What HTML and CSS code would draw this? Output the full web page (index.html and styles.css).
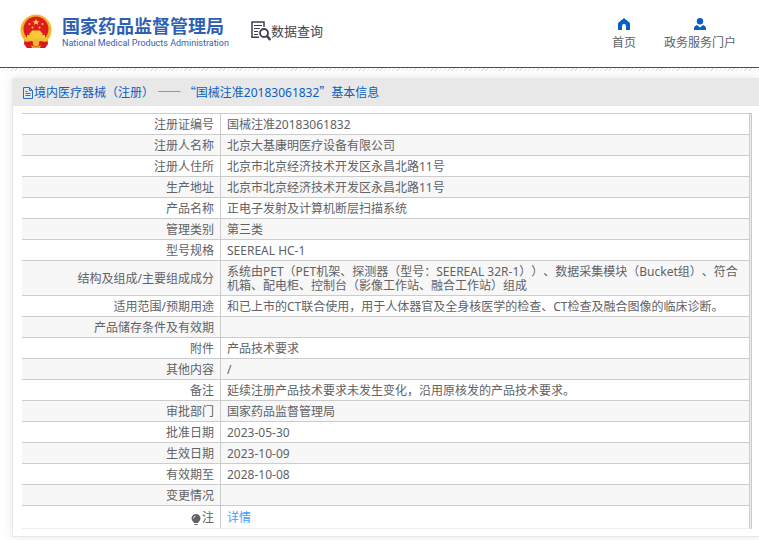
FILE: index.html
```
<!DOCTYPE html>
<html lang="zh-CN">
<head>
  <meta charset="UTF-8">
  <meta name="viewport" content="width=device-width, initial-scale=1.0">
  <title>国家药品监督管理局 数据查询</title>
  <link rel="stylesheet" href="styles.css">
</head>
<body>
  <header class="header">
    <a href="#" class="logo">
      <svg class="emblem" viewBox="0 0 32 34" width="32" height="34" aria-hidden="true">
        <path d="M5 23h22l1 7-3 4H7l-3-4z" fill="#d7191e"/>
        <circle cx="16" cy="16" r="15.500" fill="#f0b62c"/>
        <circle cx="16" cy="15" r="12.500" fill="#dc1c1c"/>
        <path d="M16 5l1 2.200h2.500l-2 1.500.8 2.300-2.300-1.400-2.300 1.400.8-2.300-2-1.500H15z" fill="#fbd545"/>
        <g fill="#f7c83a">
          <circle cx="9.500" cy="10" r="1"/>
          <circle cx="22.500" cy="10" r="1"/>
          <circle cx="12.500" cy="13.500" r="1"/>
          <circle cx="19.500" cy="13.500" r="1"/>
          <path d="M11 18l1-1.500h8l1 1.500zM9 20l2-2h10l2 2-1 1H10zM7 21h18v3H7z"/>
        </g>
        <path d="M4 24h24l-2 4H6z" fill="#f5bf32"/>
        <path d="M5 28l7-1 4 3 4-3 7 1-2 6h-5l-1-3h-6l-1 3H7z" fill="#d7191e"/>
        <circle cx="16" cy="29" r="3.200" fill="#f0b62c"/>
        <path d="M11 31q5 3 10 0l-1 3h-8z" fill="#e9a626"/>
      </svg>
      <span class="logo-text">
        <strong class="logo-cn">国家药品监督管理局</strong>
        <span class="logo-en">National Medical Products Administration</span>
      </span>
    </a>
    <a href="#" class="search-title">
      <svg viewBox="0 0 20 20" width="20" height="20" fill="none" stroke="#3f3d4c" aria-hidden="true">
        <path d="M8 16.300H1V1h12v5" stroke-width="1.500"/>
        <path d="M3 4.500h8M3 7.500h6M3 10.500h4M3 13.500h4" stroke-width="1.200"/>
        <circle cx="13" cy="12" r="4" stroke-width="1.800"/>
        <path d="M16 15l3.300 4" stroke-width="2.400"/>
      </svg>
      数据查询
    </a>
    <nav class="nav">
      <a href="#">
        <svg viewBox="0 0 12 12" width="12" height="12" aria-hidden="true"><path d="M6 0L0 5v7h4V8a2 2 0 0 1 4 0v4h4V5z" fill="#0a5fc0"/></svg>
        首页
      </a>
      <a href="#">
        <svg viewBox="0 0 12 12" width="12" height="12" aria-hidden="true"><circle cx="6" cy="3.200" r="3.200" fill="#0a5fc0"/><path d="M0 12V10q0-2 3-3l3 2.500L9 7q3 1 3 3v2z" fill="#0a5fc0"/></svg>
        政务服务门户
      </a>
    </nav>
  </header>
  <div class="hatch"></div>

  <main class="panel">
    <h1 class="panel-title">
      <svg viewBox="0 0 12 12" width="12" height="12" fill="none" stroke="#2a6fc4" aria-hidden="true"><path d="M1.500 .5h6l3 3v8h-9zM7.500 .5v3h3M3.500 4.500h2M3.500 6.500h5M3.500 8.500h5"/></svg>
      <span>境内医疗器械（注册） <span class="wide">—— “</span>国械注准20183061832<span class="wide">”</span>基本信息</span>
    </h1>
    <div class="panel-body">
      <table class="info">
        <tbody>
          <tr><th scope="row">注册证编号</th><td>国械注准20183061832</td></tr>
          <tr><th scope="row">注册人名称</th><td>北京大基康明医疗设备有限公司</td></tr>
          <tr><th scope="row">注册人住所</th><td>北京市北京经济技术开发区永昌北路11号</td></tr>
          <tr><th scope="row">生产地址</th><td>北京市北京经济技术开发区永昌北路11号</td></tr>
          <tr><th scope="row">产品名称</th><td>正电子发射及计算机断层扫描系统</td></tr>
          <tr><th scope="row">管理类别</th><td>第三类</td></tr>
          <tr><th scope="row">型号规格</th><td>SEEREAL HC-1</td></tr>
          <tr><th scope="row">结构及组成/主要组成成分</th><td>系统由PET（PET机架、探测器（型号：SEEREAL 32R-1））、数据采集模块（Bucket组）、符合机箱、配电柜、控制台（影像工作站、融合工作站）组成</td></tr>
          <tr><th scope="row">适用范围/预期用途</th><td>和已上市的CT联合使用，用于人体器官及全身核医学的检查、CT检查及融合图像的临床诊断。</td></tr>
          <tr><th scope="row">产品储存条件及有效期</th><td></td></tr>
          <tr><th scope="row">附件</th><td>产品技术要求</td></tr>
          <tr><th scope="row">其他内容</th><td>/</td></tr>
          <tr><th scope="row">备注</th><td>延续注册产品技术要求未发生变化，沿用原核发的产品技术要求。</td></tr>
          <tr><th scope="row">审批部门</th><td>国家药品监督管理局</td></tr>
          <tr><th scope="row">批准日期</th><td>2023-05-30</td></tr>
          <tr><th scope="row">生效日期</th><td>2023-10-09</td></tr>
          <tr><th scope="row">有效期至</th><td>2028-10-08</td></tr>
          <tr><th scope="row">变更情况</th><td></td></tr>
          <tr class="note">
            <th scope="row"><svg viewBox="0 0 10 12" width="10" height="12" aria-hidden="true"><path d="M5 0a4.500 4.500 0 0 0-4.500 4.500c0 2 2 3 2.500 4.500h4C7.500 7.500 9.500 6.500 9.500 4.500A4.500 4.500 0 0 0 5 0zM3.500 10h3v1h-3z" fill="#606266"/><path d="M2.500 4.500q0-2 2-2.500" fill="none" stroke="#fff" stroke-width=".8"/></svg>注</th>
            <td><a href="#">详情</a></td>
          </tr>
        </tbody>
      </table>
    </div>
  </main>
</body>
</html>
```
FILE: styles.css
```
* {
  box-sizing: border-box;
}

body {
  margin: 0;
  font-family: "Noto Sans", "Noto Sans CJK SC", sans-serif;
  font-size: 12px;
  line-height: 14px;
  text-spacing-trim: space-all;
  color: #606266;
  background-color: #fff;
  overflow-x: hidden;
}

a {
  text-decoration: none;
  color: inherit;
}

.header {
  display: flex;
  align-items: center;
  padding: 12px 23px 17px 20px;
  border-bottom: 1px solid #0a5caf;
}

.logo {
  display: flex;
  align-items: center;
  gap: 10px;
  color: #2f5fb3;
}

.logo-text {
  display: flex;
  flex-direction: column;
  padding: 3px 0 1px;
}

.logo-cn {
  font-size: 18px;
  line-height: 22px;
}

.logo-en {
  font-family: Roboto, sans-serif;
  font-size: 9px;
  line-height: 12px;
}

.search-title {
  display: flex;
  align-items: center;
  margin-left: 22px;
  font-size: 13px;
  line-height: 20px;
  color: #45444f;
}

.nav {
  display: flex;
  gap: 28px;
  margin-left: auto;
}

.nav a {
  display: flex;
  flex-direction: column;
  align-items: center;
  gap: 6px;
  padding-top: 6px;
}

.hatch {
  height: 3px;
  background: repeating-linear-gradient(135deg, #e4e4e4 0 1px, #fff 1px 3px);
}

.panel {
  margin: 7px 0 4px 12px;
  border: 1px solid #e8e8e8;
  border-right: 0;
  box-shadow: 0 0 10px rgba(0, 0, 0, 0.1);
}

.panel-title {
  display: flex;
  align-items: center;
  margin: 0;
  padding: 6px 9px;
  font-size: 12px;
  font-weight: normal;
  color: #0a5fc0;
  background-color: #e8e8e8;
}

/* full-width dashes and quotes */
.wide {
  font-family: "Noto Sans CJK SC", sans-serif;
}

.panel-body {
  padding: 7px 7px 7px 9px;
}

.info {
  width: 100%;
  border-collapse: separate;
  border-spacing: 0;
  border-top: 1px solid #ccc;
  border-right: 1px solid #c8c8d0;
  padding-right: 1px;
  background-color: #ebeef5;
}

.info th,
.info td {
  padding: 4px 6px 2px;
  height: 21px;
  border-right: 1px solid #ccc;
  border-bottom: 1px solid #ccc;
  background-color: #fff;
  font-weight: normal;
  text-align: left;
}

.info th {
  width: 199px;
  text-align: right;
}

.info tr:nth-child(even) th,
.info tr:nth-child(even) td {
  background-color: #f7f7f7;
}

.info .note th,
.info .note td {
  height: 23px;
  border-bottom-color: #ebeef5;
}

.note svg {
  margin-right: 1px;
  vertical-align: text-bottom;
}

.note a {
  color: #409eff;
}
```
